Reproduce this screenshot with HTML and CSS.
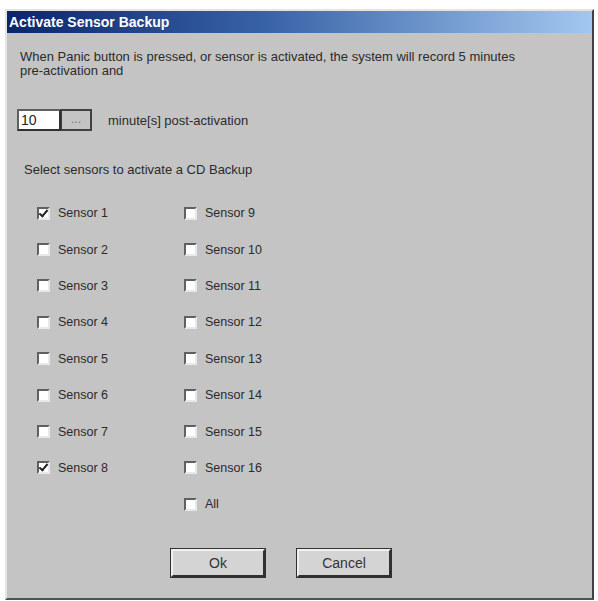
FILE: index.html
```html
<!DOCTYPE html>
<html lang="en">
<head>
  <meta charset="UTF-8" />
  <title>Activate Sensor Backup</title>
  <link rel="stylesheet" href="styles.css">
</head>
<body>

<div class="window">
  <div class="titlebar">Activate Sensor Backup</div>

  <div class="content">
    <p class="intro">When Panic button is pressed, or sensor is activated, the system will record 5 minutes<br>pre-activation and</p>

    <div class="minutes">
      <div class="field">10</div>
      <div class="browse">...</div>
      <span class="minutes-label">minute[s] post-activation</span>
    </div>

    <p class="select-label">Select sensors to activate a CD Backup</p>

    <div class="sensors">
      <div class="col">
        <div class="check"><span class="box on"></span>Sensor 1</div>
        <div class="check"><span class="box"></span>Sensor 2</div>
        <div class="check"><span class="box"></span>Sensor 3</div>
        <div class="check"><span class="box"></span>Sensor 4</div>
        <div class="check"><span class="box"></span>Sensor 5</div>
        <div class="check"><span class="box"></span>Sensor 6</div>
        <div class="check"><span class="box"></span>Sensor 7</div>
        <div class="check"><span class="box on"></span>Sensor 8</div>
      </div>
      <div class="col">
        <div class="check"><span class="box"></span>Sensor 9</div>
        <div class="check"><span class="box"></span>Sensor 10</div>
        <div class="check"><span class="box"></span>Sensor 11</div>
        <div class="check"><span class="box"></span>Sensor 12</div>
        <div class="check"><span class="box"></span>Sensor 13</div>
        <div class="check"><span class="box"></span>Sensor 14</div>
        <div class="check"><span class="box"></span>Sensor 15</div>
        <div class="check"><span class="box"></span>Sensor 16</div>
        <div class="check"><span class="box"></span>All</div>
      </div>
    </div>

    <div class="buttons">
      <button class="btn">Ok</button>
      <button class="btn">Cancel</button>
    </div>
  </div>
</div>

</body>
</html>
```

FILE: styles.css
```css
* { box-sizing: border-box; }
body {
  margin: 0;
  background: #fff;
  font-family: 'Liberation Sans', Arial, sans-serif;
  font-size: 13px;
  color: #2b2b2b;
}
.window {
  margin: 9px 4px 0 5px;
  height: 591px;
  background: #c4c4c4;
  border: 2px solid;
  border-color: #e4e4e4 #404040 #505050 #e4e4e4;
}
.titlebar {
  height: 22px;
  line-height: 22px;
  padding-left: 2px;
  color: #fff;
  font-weight: bold;
  font-size: 14px;
  background: linear-gradient(to right, #0b256b, #3a64a8 45%, #a2c8ef);
}
.content { padding: 17px 0 0 13px; }
.intro { margin: 0; line-height: 14px; }
.minutes {
  display: flex;
  align-items: center;
  margin: 31px 0 0 -3px;
  height: 22px;
}
.field {
  width: 44px;
  height: 22px;
  background: #fff;
  border: 2px solid;
  border-color: #606060 #303030 #303030 #606060;
  padding: 1px 0 0 2px;
  font-size: 14px;
  color: #222;
}
.browse {
  width: 31px;
  height: 22px;
  border: 2px solid;
  border-color: #404040;
  border-left-width: 1px;
  text-align: center;
  color: #777;
  line-height: 16px;
  font-size: 12px;
}
.minutes-label { margin-left: 16px; }
.select-label { margin: 32px 0 0 4px; line-height: 14px; }
.sensors {
  display: flex;
  margin: 18px 0 0 17px;
}
.col { width: 147px; }
.check {
  display: flex;
  align-items: center;
  height: 36.4px;
  font-size: 12.5px;
}
.box {
  width: 13px;
  height: 13px;
  margin-right: 8px;
  background: #fff;
  border: 2px solid;
  border-color: #606060 #e8e8e8 #e8e8e8 #606060;
  position: relative;
}
.box.on::after {
  content: '';
  position: absolute;
  left: 2px;
  top: -1px;
  width: 3px;
  height: 7px;
  border: solid #222;
  border-width: 0 2px 2px 0;
  transform: rotate(40deg);
}
.buttons {
  display: flex;
  gap: 32px;
  margin: 26px 0 0 151px;
}
.btn {
  width: 94px;
  height: 28px;
  background: #d4d4d4;
  border: 2px solid;
  border-color: #f0f0f0 #303030 #303030 #f0f0f0;
  outline: 1px solid #303030;
  font-family: 'Liberation Sans', Arial, sans-serif;
  font-size: 14px;
  color: #333;
  padding: 0;
}
```
